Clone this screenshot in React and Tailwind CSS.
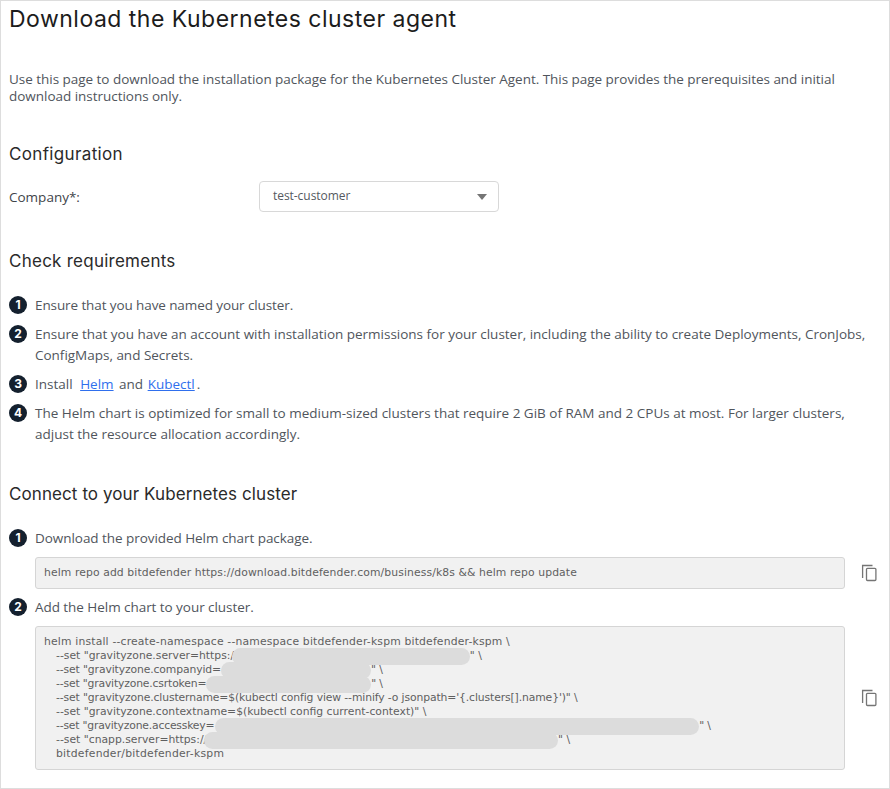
function CopyIcon() {
  return (
    <svg width="17" height="18" viewBox="0 0 17 18" fill="none" stroke="#757575" strokeWidth="1.3" className="shrink-0">
      <path d="M11.5 1.5H1.6V14" />
      <rect x="5.5" y="4.3" width="9.4" height="12.2" rx="1" />
    </svg>
  );
}

function Num({ n }) {
  return (
    <span className="w-[18px] h-[18px] mt-[1px] rounded-full bg-[#14202e] text-white text-[12px] leading-[18px] font-bold text-center shrink-0 font-['Inter',sans-serif]">
      {n}
    </span>
  );
}

function Item({ n, className = "", children }) {
  return (
    <li className={"flex gap-2 " + className}>
      <Num n={n} />
      <div className="leading-[21px]">{children}</div>
    </li>
  );
}

function H2({ className = "", children }) {
  return (
    <h2 className={"text-[17px] leading-[24px] text-[#2a2a2a] font-['Inter',sans-serif] font-normal " + className}>
      {children}
    </h2>
  );
}

function Blob({ w, ml = 0 }) {
  return (
    <span
      className="inline-block align-top h-[17px] -mt-[1px] -mb-[2px] rounded-full bg-[#dcdcdc]"
      style={{ width: w, marginLeft: ml }}
    />
  );
}

export default function App() {
  return (
    <div className="w-[890px] h-[789px] border border-[#dddddd] bg-white pl-2 pt-[3px] overflow-hidden text-[14px] text-[#50555c] font-['Open_Sans',sans-serif]">
      <h1 className="text-[23px] leading-[30px] text-[#1c1c1c] font-['Inter',sans-serif] font-normal tracking-[0.49px]">
        Download the Kubernetes cluster agent
      </h1>
      <p className="mt-[37px] w-[860px] leading-[17px] text-[13.5px] tracking-[-0.03px]">
        Use this page to download the installation package for the Kubernetes Cluster Agent. This page provides the prerequisites and initial download instructions only.
      </p>

      <H2 className="mt-[37px] tracking-[0.35px]">Configuration</H2>
      <div className="mt-[15px] flex items-center h-[31px]">
        <span className="w-[250px] pt-[1px] text-[13.5px] text-[#3f444a]">Company*:</span>
        <div className="w-[240px] h-[31px] border border-[#d8d8d8] rounded bg-white flex items-center justify-between pl-[13px] pr-[11px] text-[12px] text-[#55595f] tracking-[-0.05px]">
          <span className="-mt-[1px]">test-customer</span>
          <svg width="10" height="6" viewBox="0 0 10 6" fill="#757575">
            <path d="M0 0h10L5 6z" />
          </svg>
        </div>
      </div>

      <H2 className="mt-[37px] tracking-[0.25px]">Check requirements</H2>
      <ol className="mt-[22px] w-[870px] flex flex-col gap-2 text-[13.5px]">
        <Item n="1" className="tracking-[-0.1px]">Ensure that you have named your cluster.</Item>
        <Item n="2" className="tracking-[-0.012px]">
          Ensure that you have an account with installation permissions for your cluster, including the ability to create Deployments, CronJobs, ConfigMaps, and Secrets.
        </Item>
        <Item n="3">
          Install <a href="#" className="ml-[4px] mr-[2px] text-[#2f6fed] underline">Helm</a> and <a href="#" className="ml-[1px] mr-[2px] text-[#2f6fed] underline">Kubectl</a>.
        </Item>
        <Item n="4">
          The Helm chart is optimized for small to medium-sized clusters that require 2 GiB of RAM and 2 CPUs at most. For larger clusters, adjust the resource allocation accordingly.
        </Item>
      </ol>

      <H2 className="mt-[37px] tracking-[0.09px]">Connect to your Kubernetes cluster</H2>
      <ol className="mt-[22px] text-[13.5px] tracking-[-0.05px]">
        <Item n="1">Download the provided Helm chart package.</Item>
        <div className="mt-2 flex items-center gap-[16px] pl-[26px]">
          <div className="w-[810px] h-[32px] border border-[#d5d5d5] rounded-[3px] bg-[#f1f1f1] pl-2 flex items-center text-[10.8px] text-[#5f5f5f] font-['DejaVu_Sans',sans-serif] tracking-[0.1px]">
            helm repo add bitdefender https://download.bitdefender.com/business/k8s &amp;&amp; helm repo update
          </div>
          <CopyIcon />
        </div>
        <Item n="2" className="mt-2">Add the Helm chart to your cluster.</Item>
        <div className="mt-2 flex items-center gap-[16px] pl-[26px]">
          <div className="w-[810px] h-[144px] border border-[#d5d5d5] rounded-[3px] bg-[#f1f1f1] pl-2 pt-2 text-[10.8px] leading-[14px] text-[#5f5f5f] font-['DejaVu_Sans',sans-serif] tracking-normal whitespace-pre">
            <div className="tracking-[0.17px]">helm install --create-namespace --namespace bitdefender-kspm bitdefender-kspm \</div>
            <div className="pl-3">--set "gravityzone.server=https://<Blob w={238} ml={-6} />" \</div>
            <div className="pl-3 tracking-[-0.12px]">--set "gravityzone.companyid=<Blob w={150} />" \</div>
            <div className="pl-3 tracking-[-0.17px]">--set "gravityzone.csrtoken=<Blob w={165} />" \</div>
            <div className="pl-3 tracking-[-0.12px]">--set "gravityzone.clustername=$(kubectl config view --minify -o jsonpath='{'{'}.clusters[].name{'}'}')" \</div>
            <div className="pl-3">--set "gravityzone.contextname=$(kubectl config current-context)" \</div>
            <div className="pl-3 tracking-[-0.2px]">--set "gravityzone.accesskey=<Blob w={484} ml={1} />" \</div>
            <div className="pl-3">--set "cnapp.server=https://c<Blob w={354} ml={-9} />" \</div>
            <div className="pl-3 tracking-[0.23px]">bitdefender/bitdefender-kspm</div>
          </div>
          <CopyIcon />
        </div>
      </ol>
    </div>
  );
}
